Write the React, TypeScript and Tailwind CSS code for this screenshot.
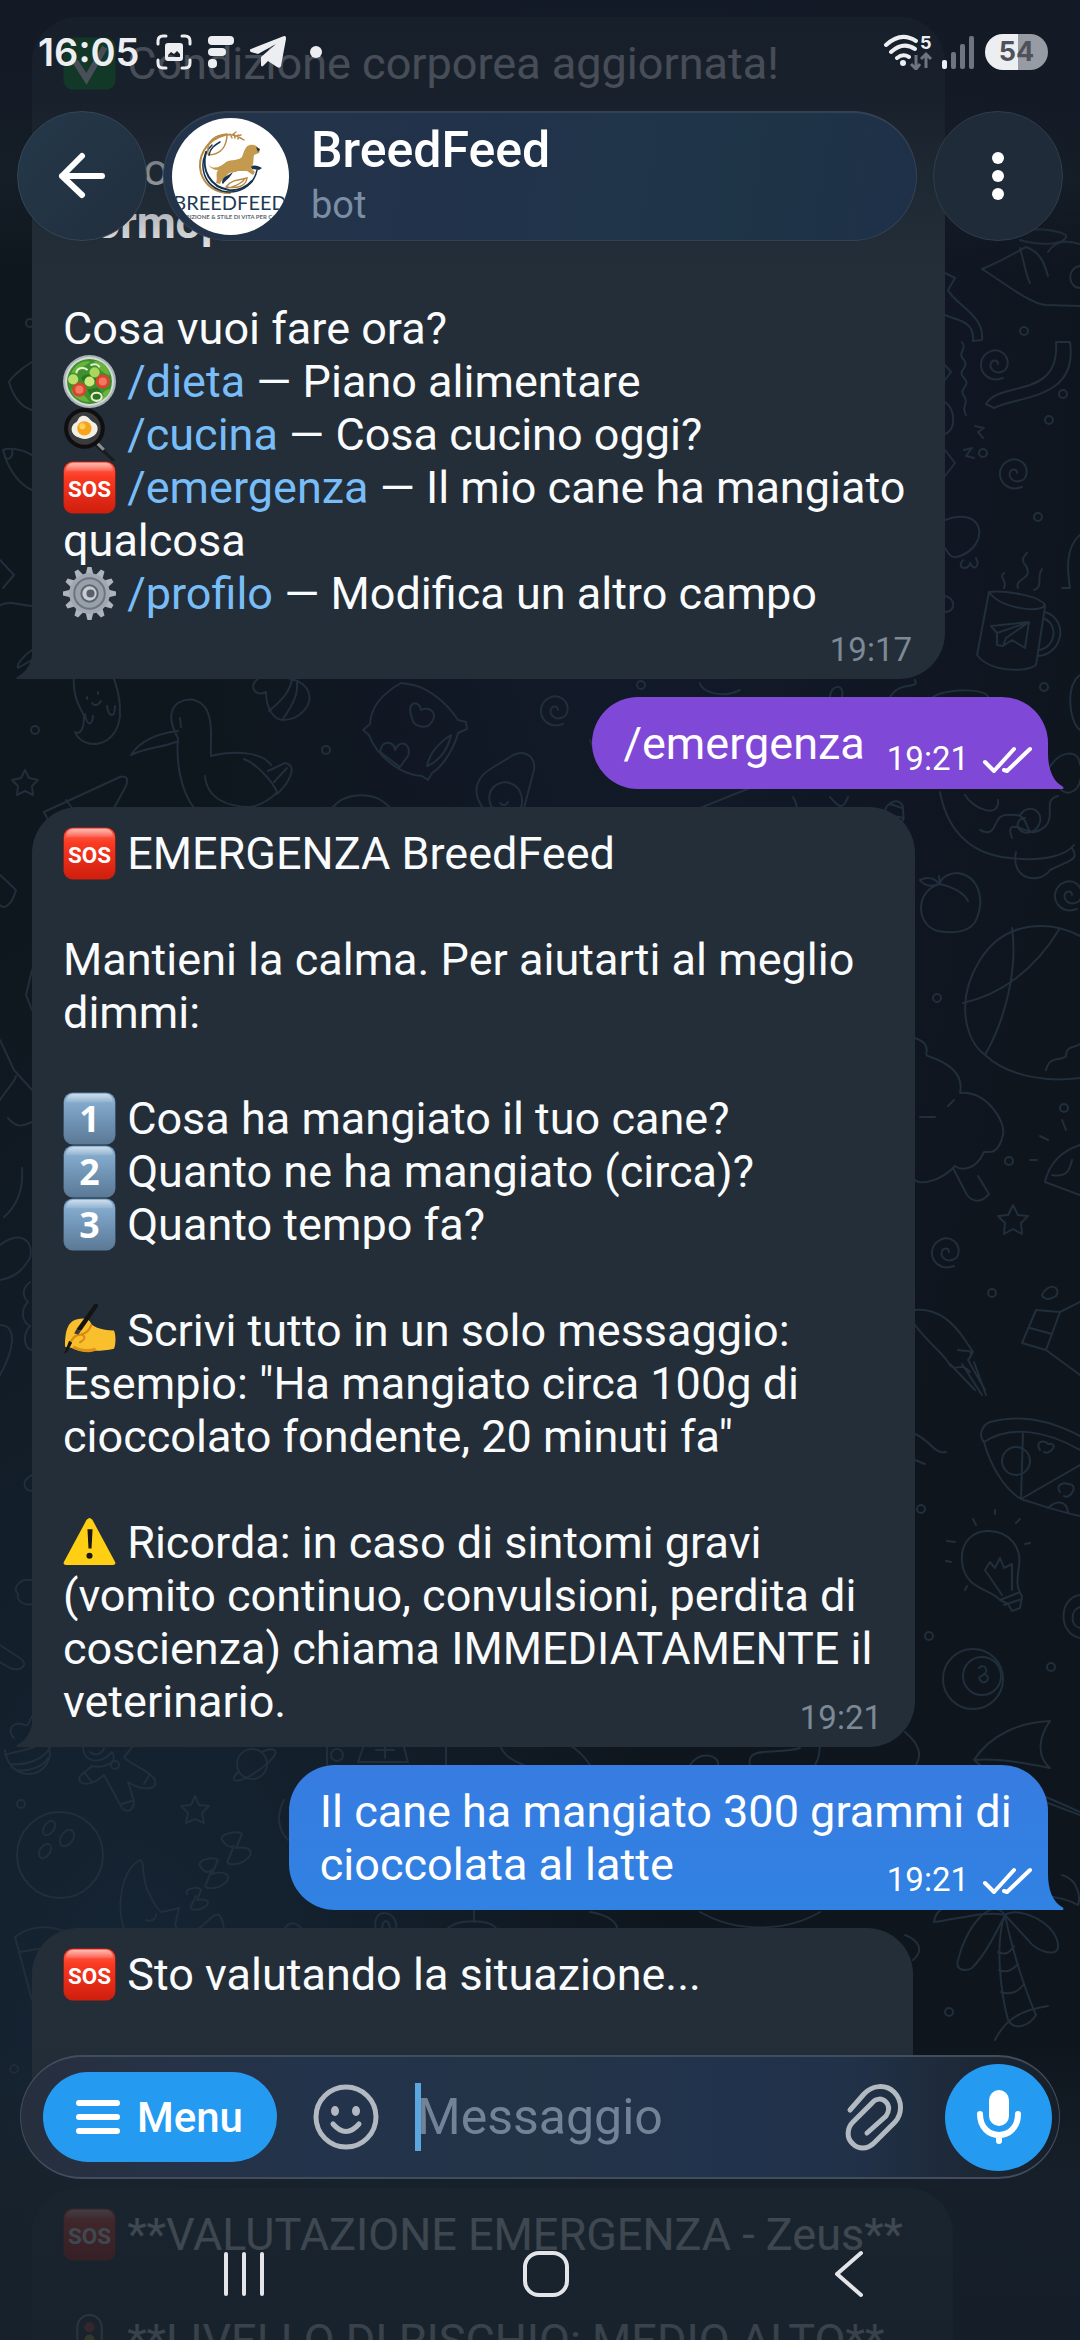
import type { ReactNode } from "react";

/* ---------- Wallpaper ---------- */

function Star({ x, y, r }: { x: number; y: number; r: number }) {
  const pts = Array.from({ length: 10 }, (_, i) => {
    const a = -Math.PI / 2 + (i * Math.PI) / 5;
    const k = i % 2 ? r * 0.5 : r;
    return `${Math.round(x + k * Math.cos(a))},${Math.round(y + k * Math.sin(a))}`;
  }).join(" ");
  return <polygon points={pts} />;
}

function Spiral({ x, y }: { x: number; y: number }) {
  return (
    <path
      transform={`translate(${x} ${y})`}
      d="M8 13C-6 18-15 8-14-2C-12-13 0-18 8-12C15-6 14 5 6 7C-1 9-6 3-4-2C-2-6 3-5 3-1"
    />
  );
}

const dots = [
  [35, 730], [326, 750], [641, 685], [1044, 687], [1024, 331], [1049, 420], [983, 453], [1063, 394],
  [1038, 517], [937, 998], [1009, 1161], [1064, 1108], [992, 1293], [921, 1509], [929, 1636], [1051, 1667],
  [949, 2012], [21, 1804], [30, 323], [14, 2069],
];

function Wallpaper() {
  return (
    <div
      aria-hidden="true"
      className="absolute inset-0 -z-10 bg-[radial-gradient(ellipse_at_60%_12%,#131a2c_0%,#131a2c00_50%),radial-gradient(ellipse_at_12%_90%,#162636_0%,#16263600_40%),linear-gradient(90deg,#0f171e,#0e151d)]"
    >
      <svg
        viewBox="0 0 1080 2340"
        preserveAspectRatio="xMidYMid slice"
        className="size-full"
        fill="none"
        stroke="#212e3b"
        strokeWidth="2"
        strokeLinecap="round"
        strokeLinejoin="round"
      >
        {dots.map(([x, y]) => (
          <circle key={`${x}-${y}`} cx={x} cy={y} r="4" />
        ))}
        <Star x={25} y={784} r={14} />
        <Star x={195} y={1811} r={15} />
        <Star x={1013} y={1221} r={16} />
        <Spiral x={555} y={711} />
        <Spiral x={995} y={365} />
        <Spiral x={1014} y={474} />
        <Spiral x={1069} y={896} />
        <Spiral x={946} y={1253} />
        {/* ghost */}
        <path d="M74 670C72 700 80 706 84 716C84 730 80 735 75 732C82 750 116 750 120 716C121 696 116 682 110 670M92 703C94 706 98 706 101 701M87 697V699M98 692V694M85 714C86 724 92 728 93 716M107 706C109 718 115 718 115 706" />
        {/* duck */}
        <path d="M194 808C180 790 176 760 178 738C170 724 168 710 178 703C190 696 205 700 209 716C213 730 210 745 211 756C235 750 262 752 271 765M178 731C160 733 140 740 131 755C145 748 160 748 176 742M205 776C207 800 230 807 250 807C262 806 275 795 277 792C272 780 255 763 244 759M268 771L285 763C298 765 290 782 277 794M274 782L287 768M180 718L181 727" />
        {/* easter egg */}
        <path d="M266 692C255 698 248 685 258 679M266 692C266 710 275 720 283 720C300 720 312 705 309 694C307 685 298 680 290 679M269 711C282 700 290 692 292 679M283 719C296 700 298 692 297 681" />
        {/* pillow with hearts */}
        <path d="M401 683C385 692 371 705 370 724L363 730L369 735C376 755 400 775 422 776L428 780L432 773C445 765 455 745 458 733L467 729L466 722L458 720C445 700 425 686 408 684ZM412 718C405 700 420 700 421 710C430 705 441 715 428 726C420 728 413 725 412 718ZM380 752C382 738 395 742 395 750C400 738 412 744 408 756L400 767ZM451 735C440 742 430 752 427 766C438 762 448 750 451 735Z" />
        {/* pizza, egg, avocado around the second message */}
        <path d="M48 820L44 812L120 777C128 775 128 780 126 786L114 808M66 800L72 808M332 808C345 792 375 790 390 808M483 808C470 790 478 776 492 768L510 757C524 748 536 756 534 770L524 808M505 820C484 808 484 785 505 782C526 785 524 808 518 812M500 803C503 806 506 806 508 802" />
        <path d="M650 760C640 775 600 770 590 740M700 808L770 780M793 797C800 808 795 815 800 820M830 797C838 806 842 812 848 797M885 810C890 798 905 798 903 812C905 822 900 826 896 822M890 804L902 808M888 815L904 818M740 690C720 700 700 690 700 683M830 697C830 685 845 682 842 697M890 697C900 680 920 690 915 680M933 697C945 688 990 688 988 698" />
        {/* mug with a paper plane */}
        <path d="M989 592C1005 590 1040 596 1045 605C1040 614 1000 608 989 592L977 655C990 672 1025 673 1036 665L1045 607M1045 612C1070 620 1062 655 1038 656M1045 619C1058 625 1056 646 1040 650M991 626L1029 622L1025 648L1012 640L1003 646L997 645V633ZM997 633L1029 622L1006 638L1003 646M1004 588C1008 580 998 578 1004 573M1018 588C1014 578 1034 580 1026 566C1020 560 1024 556 1027 553M1034 590C1044 586 1036 578 1042 569" />
        {/* hat, streamers and lightning */}
        <path d="M990 238C1000 228 1050 226 1066 235C1068 245 1040 246 1020 240M982 269C1000 262 1020 250 1026 247C1040 252 1044 262 1048 276M982 269C1000 280 1030 304 1046 305L1080 306M1020 248C1024 262 1026 276 1030 283M1048 252C1056 240 1066 240 1080 244M1080 266C1066 268 1068 288 1080 288" />
        <path d="M945 273L955 278L948 290C955 305 985 315 982 340L973 341C975 320 955 320 945 315M986 404C1000 380 1060 400 1056 342H1070C1078 400 1020 395 994 408ZM962 342C968 350 956 352 964 360C970 368 956 370 964 378C972 386 958 388 964 396C970 404 960 406 966 415M975 426L984 428L978 432L983 438M964 450L972 448L966 456L974 458" />
        <path d="M945 365L951 372L945 380M945 402C956 410 956 430 945 434M945 450L955 463L945 476M945 520C985 505 990 545 960 556C950 560 948 552 945 548M963 560C955 570 970 570 970 563C974 572 980 566 976 558M945 596C956 598 956 612 945 612M1080 535C1064 548 1068 575 1070 588L1062 588M1080 675C1066 685 1068 720 1080 730" />
        {/* noodle bowl */}
        <path d="M940 792C948 835 975 855 1010 858C1045 862 1066 855 1074 845M965 795C972 808 1000 820 998 800M980 830C1000 840 990 812 1010 815C1035 812 1020 840 1040 830C1060 820 1040 800 1058 796M1020 815C1030 800 1050 815 1035 830C1020 840 1010 820 1025 818M1016 852C1010 880 1040 885 1050 870C1070 860 1080 860 1072 848M1048 770C1060 748 1080 750 1080 765M1058 785C1065 800 1080 790 1080 780M1012 838C1005 820 1020 828 1030 832" />
        {/* peach */}
        <path d="M940 884C915 890 915 925 938 931C955 934 972 932 977 918C985 898 978 876 958 873C946 873 940 880 940 884C950 886 964 892 968 901M940 884L935 880C932 878 926 877 920 880C926 888 934 886 940 884L939 876" />
        {/* beach ball */}
        <path d="M1080 936C1050 920 1005 920 980 960C955 1000 965 1040 985 1055C1010 1078 1050 1082 1080 1078M1012 928C1018 970 1005 1020 985 1055M1060 928C1035 970 1000 995 963 1003" />
        {/* tree */}
        <path d="M915 1038C935 1045 922 1056 928 1056C940 1060 965 1070 960 1093C985 1090 1006 1120 1003 1135C998 1155 990 1152 984 1152C975 1172 960 1170 955 1166C940 1182 920 1185 915 1180M953 1168L967 1195C975 1205 984 1200 989 1194L978 1176M920 1117H935M948 1106L954 1100M1046 1070C1050 1055 1060 1062 1066 1056C1066 1045 1075 1048 1080 1044" />
        <path d="M1045 1182C1050 1160 1065 1150 1080 1145M1045 1182L1080 1195M1052 1175C1068 1178 1070 1168 1072 1160M1040 1136L1048 1140M1030 1160H1037M1062 1120L1066 1130" />
        {/* squid */}
        <path d="M915 1310C940 1308 955 1325 965 1340L973 1352L968 1360L985 1390M974 1362L986 1395M962 1364L982 1395M950 1364L975 1390M915 1325C930 1345 940 1350 948 1362C955 1375 960 1360 970 1372M958 1350C966 1352 974 1348 970 1358M915 1434C930 1440 935 1455 946 1452M915 1460L925 1464" />
        {/* parcel and pizza slice */}
        <path d="M1036 1310L1060 1312L1046 1350L1022 1343ZM1030 1328L1052 1334M1060 1312L1080 1302M1046 1350L1080 1375M1042 1295C1048 1282 1062 1286 1056 1296C1050 1300 1044 1300 1042 1295" />
        <path d="M984 1442C978 1436 982 1425 990 1422C1020 1414 1050 1420 1080 1436M984 1442C1010 1425 1045 1430 1080 1450M984 1442C990 1465 1005 1490 1021 1499C1040 1505 1060 1512 1080 1516M1023 1432L1021 1499L1080 1465M1040 1450C1034 1440 1046 1440 1048 1444C1060 1442 1050 1456 1044 1452M1060 1492C1054 1484 1066 1482 1068 1484C1080 1484 1070 1500 1064 1496M1048 1508C1056 1500 1066 1500 1068 1512" />
        <circle cx="1016" cy="1461" r="14" />
        {/* light bulb */}
        <path d="M1000 1600C990 1588 965 1590 962 1562C960 1540 975 1530 990 1531C1010 1532 1022 1548 1019 1566C1017 1580 1016 1588 1022 1596L1020 1608L1012 1611L1008 1604ZM1000 1600L1020 1592M1004 1605L1022 1599M1002 1595L985 1570L990 1562L995 1568L1000 1558L1004 1568L1012 1564L1012 1590M947 1541L955 1542M946 1561L951 1562M973 1519L976 1525M995 1510V1514M1020 1519L1016 1523M1025 1544L1030 1543M965 1590L967 1586" />
        <ellipse cx="973" cy="1679" rx="30" ry="30" />
        <circle cx="982" cy="1676" r="19" />
        <path d="M979 1668C985 1662 989 1672 984 1674C992 1676 986 1686 981 1681C976 1676 984 1676 984 1674M1080 1595C1058 1598 1058 1634 1080 1638M1080 1607C1070 1610 1070 1626 1080 1628" />
        {/* umbrella and palm */}
        <path d="M974 1760C990 1735 1020 1722 1050 1721C1040 1735 1035 1755 1050 1768C1030 1764 1000 1758 974 1760ZM974 1760C990 1775 1020 1785 1080 1812M1040 1800L1080 1815M905 1732C920 1745 922 1755 916 1765" />
        <path d="M1005 1915C995 1940 1000 1990 1008 2020C1015 2032 1030 2025 1036 2015C1025 1990 1012 1950 1005 1915M998 1952C1006 1956 1010 1952 1014 1946M999 1970C1008 1974 1014 1968 1018 1964M1001 1992C1012 1996 1020 1990 1024 1984M1005 1915C990 1895 965 1930 958 1960C955 1970 965 1972 972 1968C985 1955 995 1935 1005 1915C1020 1905 1060 1925 1058 1948C1055 1958 1035 1950 1028 1940L1005 1915M1005 1915C985 1910 955 1920 934 1922C936 1905 960 1898 985 1905M1062 1875C1080 1880 1080 1900 1078 1905C1060 1895 1030 1892 1012 1905M995 2040C1005 2020 1020 2010 1048 2006M913 1960C925 1950 918 1940 905 1935" />
        {/* gingerbread man */}
        <path d="M83 1745C82 1762 100 1766 112 1752M112 1752C120 1765 100 1768 92 1766L80 1776C76 1785 90 1788 104 1775L122 1808C130 1816 137 1806 132 1795L128 1782C140 1790 158 1792 155 1780C150 1770 130 1765 124 1757L134 1745M90 1752C95 1757 102 1754 104 1748M84 1772L92 1782M144 1784L150 1774M122 1804L134 1800" />
        <circle cx="115" cy="1765" r="4" />
        {/* planets */}
        <path d="M5 1750C8 1780 45 1782 50 1755C50 1745 45 1740 40 1738M5 1755C20 1750 35 1750 46 1740M10 1764C28 1766 44 1758 50 1748M16 1770C30 1772 44 1766 48 1758" />
        <circle cx="252" cy="1764" r="15" />
        <path d="M239 1771C228 1782 236 1783 248 1777C262 1769 278 1756 275 1751C272 1747 266 1750 262 1752" />
        {/* bowling ball */}
        <circle cx="60" cy="1855" r="43" />
        <ellipse cx="49" cy="1828" rx="5" ry="8" transform="rotate(35 49 1828)" />
        <ellipse cx="67" cy="1838" rx="6" ry="9" transform="rotate(35 67 1838)" />
        <ellipse cx="45" cy="1851" rx="5" ry="8" transform="rotate(35 45 1851)" />
        {/* sleeping moon */}
        <path d="M125 1932C115 1905 122 1870 140 1860C146 1862 140 1880 150 1895C154 1905 160 1912 162 1912L179 1908L175 1925L180 1932M146 1920C150 1922 156 1920 156 1914M192 1932C205 1928 212 1912 219 1915C224 1920 224 1928 223 1932" />
        <path d="M222 1840C218 1834 238 1830 242 1834L236 1848C250 1846 254 1852 248 1858C240 1866 224 1866 228 1860L234 1846C230 1848 226 1846 222 1840ZM200 1866C196 1860 214 1856 218 1860L212 1874C226 1870 232 1876 226 1882C218 1890 202 1890 206 1884L212 1870C208 1874 204 1872 200 1866ZM187 1894C184 1888 198 1886 201 1890L197 1900C206 1898 211 1902 206 1906C200 1911 188 1911 191 1906L196 1896" />
        <path d="M15 1937C30 1925 50 1925 66 1932M15 1937L32 2000M19 1952L45 1948M284 1800C276 1815 278 1830 288 1840M327 1740V1765M358 1762C362 1750 364 1745 366 1740M402 1740L408 1762L358 1762M376 1750H394M385 1744V1758M446 1740V1765M500 1745C505 1760 520 1762 525 1766M590 1765C580 1750 570 1745 560 1740M690 1765C700 1750 720 1755 718 1765M750 1765C745 1745 780 1755 800 1748M820 1740C820 1755 818 1760 815 1765M284 1930C290 1918 300 1925 302 1930M376 1930C370 1905 400 1910 396 1930M382 1930C382 1918 390 1918 390 1930M448 1928C460 1918 490 1920 496 1928M474 1910V1922M590 1912C610 1915 620 1925 616 1930M700 1912C740 1935 790 1930 820 1912" />
        <circle cx="337" cy="1755" r="6" />
        {/* left edge */}
        <path d="M32 362C18 370 10 380 9 382C14 400 24 408 32 410M32 455C20 448 8 448 3 450C8 470 20 485 32 490M12 450C14 458 8 460 5 458M0 560L14 575L3 588M0 605C12 600 22 606 32 606M32 650C24 655 16 665 18 668L32 660M0 875L16 890C12 905 4 910 0 905M32 970L26 995L32 1010M0 1040L14 1070L32 1090M0 1100C10 1085 16 1080 16 1076M8 1118C18 1130 24 1125 32 1122M22 1168C24 1195 12 1210 4 1217M0 1245C20 1230 34 1240 30 1258C20 1275 10 1278 0 1280M30 1282C20 1290 24 1298 28 1302C20 1310 22 1322 30 1326C22 1335 24 1348 32 1350M0 1325C18 1325 14 1350 0 1375M32 1475C22 1480 22 1490 32 1491M32 1580C18 1578 12 1590 18 1594C16 1602 26 1606 32 1604M0 1645L20 1658C30 1665 20 1672 10 1668L0 1662M32 1716C28 1722 30 1728 22 1724C10 1722 8 1732 14 1738" />
      </svg>
    </div>
  );
}

/* ---------- Emoji ---------- */

function Emoji({ label, children }: { label: string; children: ReactNode }) {
  return (
    <svg
      role="img"
      aria-label={label}
      viewBox="0 0 52 52"
      className="-my-2 inline-block size-[53px] align-[-3px]"
    >
      {children}
    </svg>
  );
}

function Key({ text, from, to, edge, size }: { text: string; from: string; to: string; edge: string; size: number }) {
  const id = `key-${text}`;
  return (
    <Emoji label={text}>
      <defs>
        <linearGradient id={id} x1="0" y1="0" x2="0" y2="1">
          <stop offset="0" stopColor={from} />
          <stop offset="0.3" stopColor={edge} />
          <stop offset="1" stopColor={to} />
        </linearGradient>
        <linearGradient id={`${id}-shine`} x1="0" y1="0" x2="0" y2="1">
          <stop offset="0" stopColor="#fff" stopOpacity="0.55" />
          <stop offset="1" stopColor="#fff" stopOpacity="0.1" />
        </linearGradient>
      </defs>
      <rect x="0.5" y="0.5" width="51" height="51" rx="9" fill={to} />
      <rect x="1" y="1" width="50" height="49" rx="9" fill={`url(#${id})`} />
      <path d="M3 10C3 5 6 2 10 2H42C46 2 49 5 49 10Z" fill={`url(#${id}-shine)`} />
      <text
        x="26"
        y={size > 30 ? 39 : 35}
        textAnchor="middle"
        fontFamily={size > 30 ? "'Open Sans', sans-serif" : "Roboto, sans-serif"}
        fontWeight="700"
        fontSize={size}
        fill="#fff"
      >
        {text}
      </text>
    </Emoji>
  );
}

const Sos = () => <Key text="SOS" from="#ff6a5a" edge="#fb3a22" to="#d01f0e" size={22} />;
const Digit = ({ n }: { n: string }) => <Key text={n} from="#8fb4d4" edge="#7da3c6" to="#5b7a97" size={35} />;

const Check = () => (
  <Emoji label="Fatto">
    <rect x="0.5" y="0.5" width="51" height="51" rx="9" fill="#0a9a25" />
    <path d="M12 24L23 41L41 10" fill="none" stroke="#fff" strokeWidth="6" />
  </Emoji>
);

const Salad = () => (
  <Emoji label="Insalata">
    <circle cx="26" cy="26" r="26" fill="#aab4b6" />
    <circle cx="26" cy="26" r="24" fill="#d3dad9" />
    <circle cx="26" cy="26" r="22" fill="#3f8f2c" />
    <path d="M8 18C12 8 22 4 27 7C20 10 18 16 8 18ZM30 6C40 6 45 12 46 20C38 18 34 12 30 6ZM8 34C14 32 22 40 26 46C18 46 10 42 8 34ZM36 44C38 36 42 34 47 33C45 40 41 43 36 44Z" fill="#67b43c" />
    <path d="M18 22C24 16 32 20 33 26C28 30 20 30 18 22ZM24 34L34 32L40 40L30 46Z" fill="#2c7420" />
    <circle cx="39" cy="26" r="7" fill="#d9432f" />
    <circle cx="39" cy="26" r="4" fill="#ef7a5f" />
    <circle cx="16" cy="34" r="7" fill="#d9432f" />
    <circle cx="16" cy="34" r="4" fill="#ef7a5f" />
    <circle cx="10" cy="24" r="5" fill="#b8df6c" />
    <circle cx="26" cy="26" r="5" fill="#c9e97f" />
    <circle cx="31" cy="17" r="5" fill="#a9d65c" />
    <g fill="none" stroke="#e6efd2" strokeWidth="2">
      <path d="M13 18C14 11 22 12 24 15M27 10C32 8 35 10 36 12" />
      <ellipse cx="33" cy="41" rx="5" ry="4" />
    </g>
  </Emoji>
);

const Pan = () => (
  <Emoji label="Padella">
    <path d="M34 34L51 51C52 54 49 54 46 50L31 37Z" fill="#1b1b1c" />
    <path d="M34 35L40 41" stroke="#8b8f92" strokeWidth="3" />
    <circle cx="21" cy="20" r="20" fill="#0f0f10" />
    <circle cx="21" cy="20" r="16" fill="#3a3b3d" />
    <path d="M18 8C24 6 26 12 30 14C36 17 35 25 29 28C23 32 17 30 13 28C6 24 8 16 13 14C15 12 15 9 18 8Z" fill="#f2efe6" />
    <circle cx="21" cy="20" r="7" fill="#f6a51b" />
    <circle cx="19" cy="18" r="3" fill="#ffd05a" />
  </Emoji>
);

const Gear = () => (
  <Emoji label="Impostazioni">
    <g fill="#aeb4bc">
      {Array.from({ length: 12 }, (_, i) => (
        <path key={i} d="M22 8L24 0H28L30 8Z" transform={`rotate(${i * 30} 26 26)`} />
      ))}
    </g>
    <circle cx="26" cy="26" r="20" fill="#a2a8b1" />
    <circle cx="26" cy="26" r="16" fill="#6d7580" />
    <circle cx="26" cy="26" r="14" fill="#98a0aa" />
    <circle cx="26" cy="26" r="9" fill="#5d6570" />
    <circle cx="26" cy="26" r="7" fill="#c8cdd3" />
    <circle cx="27" cy="26" r="4" fill="#59606a" />
  </Emoji>
);

const Writing = () => (
  <Emoji label="Mano che scrive">
    <path d="M2 42C2 28 4 17 14 15C22 13 26 15 28 20C32 23 36 25 50 26C52 30 52 40 50 44C40 46 36 46 30 46C22 48 14 46 8 43Z" fill="#f9bf2c" />
    <path d="M6 42C8 34 12 30 18 30C24 32 20 36 16 38M28 20C26 26 22 29 18 30" fill="none" stroke="#d98a12" strokeWidth="2" />
    <path d="M10 42C16 46 28 47 32 44" fill="none" stroke="#de9317" strokeWidth="3" />
    <path d="M31 0C34 -1 35 1 34 3L18 26L13 25Z" fill="#141414" />
    <path d="M13 25L18 26L15 30L11 29Z" fill="#3b3b3b" />
    <path d="M6 36L9 38L4 47L1 49Z" fill="#141414" />
  </Emoji>
);

const Warning = () => (
  <Emoji label="Attenzione">
    <path d="M26 2C27 2 28 3 29 4L51 45C52 47 51 48 49 48H3C1 48 0 47 1 45L23 4C24 3 25 2 26 2Z" fill="#ffcf14" />
    <path d="M24 13H29L28 32H25Z" fill="#17181a" />
    <circle cx="26" cy="39" r="3" fill="#17181a" />
  </Emoji>
);

const TrafficLight = () => (
  <Emoji label="Semaforo">
    <rect x="14" y="1" width="24" height="50" rx="12" fill="#2b3137" stroke="#9aa3aa" strokeWidth="2" />
    <circle cx="26" cy="13" r="5" fill="#d8483f" />
    <circle cx="26" cy="25" r="5" fill="#dcb53a" />
    <circle cx="26" cy="38" r="5" fill="#48b35a" />
  </Emoji>
);

/* ---------- Messages ---------- */

function DoubleTick() {
  return (
    <svg aria-label="Letto" role="img" viewBox="0 0 52 30" className="h-[30px] w-[52px]" fill="none" stroke="#fff" strokeWidth="4" strokeLinecap="round" strokeLinejoin="round">
      <path d="M4 18L13 27L33 5M23 26L26 27L49 5" />
    </svg>
  );
}

function Received({ size, tail, time, children }: { size: string; tail?: boolean; time?: string; children: ReactNode }) {
  return (
    <article className={`relative max-w-full self-start bg-[#232e39] px-[31px] pt-5 pb-[19px] ${tail ? "rounded-[46px] rounded-bl-none" : "rounded-[46px]"} ${size}`}>
      {children}
      {time && <time className="absolute right-[33px] bottom-3 text-[33px] leading-[34px] text-[#7c8996]">{time}</time>}
      {tail && (
        <svg aria-hidden="true" viewBox="0 0 17 24" className="absolute bottom-0 -left-4 h-6 w-[17px]" fill="#232e39">
          <path d="M17 0H16C15 10 9 18 1 22C0 23 0 24 2 24H17Z" />
        </svg>
      )}
    </article>
  );
}

function Sent({ tone, tailFill, children }: { tone: string; tailFill: string; children: ReactNode }) {
  return (
    <article className={`relative flex max-w-full items-end self-end rounded-[46px] rounded-br-none pt-5 pr-[15px] pb-[13px] pl-[31px] text-white ${tone}`}>
      {children}
      <div className="flex shrink-0 items-center gap-3 self-end">
        <time className="text-[33px] leading-[34px]">19:21</time>
        <DoubleTick />
      </div>
      <svg aria-hidden="true" viewBox="0 0 17 36" className={`absolute -right-4 bottom-0 h-9 w-[17px] ${tailFill}`}>
        <path d="M0 0H1C1 16 6 28 15 33C17 34 17 36 15 36H0Z" />
      </svg>
    </article>
  );
}

function Command({ name }: { name: string }) {
  return (
    <a href={`#${name}`} className="text-[#78bdf8]">
      /{name}
    </a>
  );
}

function Gap() {
  return <div className="h-[53px]" />;
}

/* ---------- Status bar ---------- */

function StatusBar() {
  return (
    <div className="flex h-[104px] items-center justify-between pr-8 pl-[38px] text-[#eceef1]">
      <div className="flex items-center">
        <span className="w-[118px] font-['Inter'] text-[38px] leading-[44px] font-semibold">16:05</span>
        <svg aria-hidden="true" viewBox="0 0 36 36" className="size-9" fill="none" stroke="currentColor" strokeWidth="3" strokeLinecap="round">
          <path d="M2 10V7Q2 2 7 2H10M26 2H29Q34 2 34 7V10M34 26V29Q34 34 29 34H26M10 34H7Q2 34 2 29V26" />
          <path d="M12 9H24Q27 9 27 12V24Q27 27 24 27H12Q9 27 9 24V12Q9 9 12 9ZM12 23H24V20L21 17L18 20L15 18L12 21Z" fill="currentColor" fillRule="evenodd" stroke="none" />
        </svg>
        <svg aria-hidden="true" viewBox="0 0 26 32" className="ml-4 h-8 w-[26px]" fill="currentColor">
          <rect x="0" y="0" width="26" height="9" rx="4" />
          <rect x="0" y="12" width="18" height="8" rx="4" />
          <rect x="0" y="23" width="9" height="9" rx="4" />
        </svg>
        <svg aria-hidden="true" viewBox="0 0 36 32" className="ml-4 h-8 w-9" fill="currentColor">
          <path d="M34 0C36 0 36 1 36 3L31 30C30 32 29 32 27 31L18 25L13 30C12 31 11 30 11 29V21L26 8L8 18L1 16C-1 15-1 14 1 13Z" />
        </svg>
        <span className="ml-6 size-3 rounded-full bg-current" />
      </div>
      <div className="flex items-center">
        <svg aria-label="Wi-Fi 5" role="img" viewBox="0 0 50 36" className="h-9 w-[50px]">
          <g fill="none" stroke="currentColor" strokeWidth="4" strokeLinecap="round">
            <path d="M3 11Q18-3 33 7M8 18Q20 7 32 15M14 24Q20 19 26 23" />
          </g>
          <circle cx="20" cy="29" r="3" fill="currentColor" />
          <text x="37" y="15" fontFamily="Inter, sans-serif" fontWeight="700" fontSize="18" fill="currentColor">5</text>
          <path d="M33 21V34M28 30L33 35L37 30M43 34V21M38 25L43 20L48 25" fill="none" stroke="#6f7580" strokeWidth="3" />
        </svg>
        <svg aria-label="Segnale" role="img" viewBox="0 0 32 36" className="ml-[9px] h-9 w-8">
          <rect x="0" y="26" width="5" height="9" rx="2" fill="currentColor" />
          <rect x="9" y="18" width="5" height="17" rx="2" fill="#6f7580" />
          <rect x="18" y="10" width="5" height="25" rx="2" fill="#6f7580" />
          <rect x="27" y="2" width="5" height="33" rx="2" fill="#6f7580" />
        </svg>
        <span className="ml-[11px] flex h-9 w-[63px] items-center justify-center rounded-full bg-[linear-gradient(90deg,#eceef1_53%,#979ba4_53%)] font-['Inter'] text-[27px] leading-9 font-bold text-[#4f5258]">
          54
        </span>
      </div>
    </div>
  );
}

/* ---------- Header ---------- */

function Avatar() {
  return (
    <svg aria-label="Logo BreedFeed" role="img" viewBox="0 0 117 117" className="size-[117px] rounded-full bg-white">
      <g fill="none" strokeLinecap="round">
        <path d="M53 17C33 22 25 40 29 55C33 68 44 75 58 75" stroke="#b98a45" strokeWidth="2" />
        <path d="M40 27C25 42 29 66 50 73C66 77 82 68 85 52" stroke="#17344e" strokeWidth="1.5" />
        <path d="M34 34C29 52 38 69 57 72C66 73 75 69 80 63" stroke="#17344e" strokeWidth="2" />
        <path d="M36 36C34 22 44 17 55 16C55 27 50 36 37 37Z" stroke="#b98a45" strokeWidth="1.5" />
        <path d="M37 37C38 30 43 27 48 24" stroke="#17344e" strokeWidth="1.5" />
        <path d="M54 69C60 61 68 62 75 60C74 68 66 71 54 69M60 69C66 67 70 64 72 62" stroke="#b98a45" strokeWidth="1.5" />
        <path d="M54 17C60 16 66 18 72 22M58 16L60 20M62 16L63 20M66 17L66 21M60 17L64 14M65 18L69 17" stroke="#b98a45" strokeWidth="1.5" />
      </g>
      <path d="M36 46C40 52 48 50 54 44C60 41 66 43 70 39C72 34 73 28 78 27C83 26 86 29 88 32L87 35L82 37C81 43 82 47 79 50L83 54L81 57L75 53L66 53C63 55 60 53 56 56C54 59 50 61 48 66L44 65C46 60 43 56 46 52C42 52 38 50 36 46Z" fill="#c39a4e" />
      <path d="M50 65C50 58 56 58 61 54C58 60 54 62 51 66ZM79 49C82 46 86 48 90 50L87 52L80 51ZM84 29L88 31L86 34Z" fill="#17344e" />
      <text x="58" y="92" textAnchor="middle" fontFamily="Lato, sans-serif" fontSize="20" fill="#1e3a54">BREEDFEED</text>
      <text x="56" y="101" textAnchor="middle" fontFamily="Lato, sans-serif" fontSize="6" fontWeight="700" fill="#5b6670">NUTRIZIONE &amp; STILE DI VITA PER CANI</text>
    </svg>
  );
}

function Header() {
  return (
    <header className="absolute inset-x-0 top-0 bg-[linear-gradient(180deg,#141b27cc_0px,#151c28c4_100px,#1a232e80_180px,#1f293300_100%)] pb-7">
      <StatusBar />
      <div className="flex items-center gap-4 px-[17px] pt-[7px]">
        <button type="button" aria-label="Indietro" className="flex size-[130px] shrink-0 items-center justify-center rounded-full border border-[#364554] bg-linear-to-br from-[#24394a] to-[#212e3d]">
          <svg aria-hidden="true" viewBox="0 0 48 48" className="size-12" fill="none" stroke="#fff" strokeWidth="6" strokeLinecap="round" strokeLinejoin="round">
            <path d="M44 24H4M24 4L4 24L24 43" />
          </svg>
        </button>
        <div className="flex h-[130px] min-w-0 grow items-center gap-[22px] rounded-full border border-t-2 border-[#334253] bg-[linear-gradient(100deg,#23344a_0%,#21324a_35%,#20344a_60%,#1e3446_80%,#1f3049_100%)] pl-2">
          <Avatar />
          <div>
            <h1 className="text-[50px] leading-[56px] font-medium text-white">BreedFeed</h1>
            <p className="text-[38px] leading-[54px] text-[#7a8ea4]">bot</p>
          </div>
        </div>
        <button type="button" aria-label="Altre opzioni" className="flex size-[130px] shrink-0 flex-col items-center justify-center gap-[6px] rounded-full border border-[#2f3d4b] bg-[#1f2b39]">
          <span className="size-3 rounded-full bg-white" />
          <span className="size-3 rounded-full bg-white" />
          <span className="size-3 rounded-full bg-white" />
        </button>
      </div>
    </header>
  );
}

/* ---------- Composer and system navigation ---------- */

function Footer() {
  return (
    <footer className="absolute inset-x-0 bottom-0 bg-[linear-gradient(180deg,#18222c00_0px,#18222cd0_130px,#16202ad8_100%)] px-5 pt-3">
      <form onSubmit={(e) => e.preventDefault()} className="flex h-[124px] items-center rounded-full border border-t-2 border-b-2 border-[#414d5c] bg-[linear-gradient(90deg,#272f3e_0%,#253247_15%,#22334b_30%,#233447_50%,#21324d_68%,#213148_80%,#1d2836_92%,#161f29_100%)] pr-[7px] pl-[22px]">
        <button type="button" className="flex h-[90px] w-[234px] shrink-0 items-center gap-4 rounded-full bg-[#249af1] pl-8 text-[42px] font-medium text-white">
          <svg aria-hidden="true" viewBox="0 0 46 36" className="h-9 w-[46px] shrink-0" stroke="#fff" strokeWidth="6" strokeLinecap="round">
            <path d="M4 4H42M4 18H42M4 32H42" />
          </svg>
          Menu
        </button>
        <button type="button" aria-label="Emoji" className="ml-9 shrink-0">
          <svg aria-hidden="true" viewBox="0 0 66 66" className="size-[66px]">
            <circle cx="33" cy="33" r="30" fill="none" stroke="#b3b9c1" strokeWidth="5" />
            <ellipse cx="22" cy="27" rx="4" ry="5" fill="#b3b9c1" />
            <ellipse cx="43" cy="27" rx="4" ry="5" fill="#b3b9c1" />
            <path d="M20 40Q33 55 46 40" fill="none" stroke="#b3b9c1" strokeWidth="5" strokeLinecap="round" />
          </svg>
        </button>
        <span aria-hidden="true" className="ml-9 h-[68px] w-[6px] shrink-0 bg-[#5ba6df]" />
        <input aria-label="Messaggio" placeholder="Messaggio" className="-ml-1 min-w-0 grow bg-transparent text-[50px] leading-[68px] text-white outline-none placeholder:text-[#728398]" />
        <button type="button" aria-label="Allega" className="mr-10 shrink-0">
          <svg aria-hidden="true" viewBox="0 0 60 68" className="h-[68px] w-[60px]" fill="none" stroke="#b3b9c1" strokeWidth="5" strokeLinecap="round">
            <path d="M5 27L19 11C27 2 41 1 49 9C58 18 57 31 50 39L29 60C22 67 13 66 8 61C1 55 2 45 8 39L27 20C31 15 37 15 41 19C45 23 44 29 41 33L22 50" />
          </svg>
        </button>
        <button type="button" aria-label="Registra messaggio vocale" className="flex size-[107px] shrink-0 items-center justify-center rounded-full bg-[#249af1]">
          <svg aria-hidden="true" viewBox="0 0 46 56" className="h-14 w-[46px]">
            <rect x="13" y="1" width="20" height="36" rx="10" fill="#fff" />
            <path d="M4 25C4 53 42 53 42 25M23 46V52" fill="none" stroke="#fff" strokeWidth="6" strokeLinecap="round" />
          </svg>
        </button>
      </form>
      <nav aria-label="Navigazione di sistema" className="flex h-[161px] items-center justify-between pt-7 pr-[188px] pl-[200px]">
        <button type="button" aria-label="App recenti">
          <svg aria-hidden="true" viewBox="0 0 48 48" className="size-12" stroke="#e3e5e8" strokeWidth="4" strokeLinecap="round">
            <path d="M6 4V44M24 4V44M42 4V44" />
          </svg>
        </button>
        <button type="button" aria-label="Home">
          <svg aria-hidden="true" viewBox="0 0 48 48" className="size-12" fill="none" stroke="#e3e5e8" strokeWidth="4">
            <rect x="3" y="3" width="42" height="42" rx="14" />
          </svg>
        </button>
        <button type="button" aria-label="Indietro">
          <svg aria-hidden="true" viewBox="0 0 48 48" className="size-12" fill="none" stroke="#e3e5e8" strokeWidth="4" strokeLinecap="round" strokeLinejoin="round">
            <path d="M37 3L13 24L37 45" />
          </svg>
        </button>
      </nav>
    </footer>
  );
}

export default function App() {
  return (
    <div className="relative isolate h-screen overflow-hidden bg-[#0f161f] font-['Roboto',sans-serif]">
      <Wallpaper />
      <main className="flex flex-col gap-[18px] px-8 pt-[17px] text-[45px] leading-[53px] text-[#fafbfc]">
        <Received size="w-[913px]" tail time="19:17">
          <p><Check /> Condizione corporea aggiornata!</p>
          <Gap />
          <p>Stato:</p>
          <p className="font-bold">Normopeso</p>
          <Gap />
          <p>Cosa vuoi fare ora?</p>
          <p><Salad /> <Command name="dieta" /> — Piano alimentare</p>
          <p><Pan /> <Command name="cucina" /> — Cosa cucino oggi?</p>
          <p><Sos /> <Command name="emergenza" /> — Il mio cane ha mangiato qualcosa</p>
          <p className="pb-10"><Gear /> <Command name="profilo" /> — Modifica un altro campo</p>
        </Received>

        <Sent tone="bg-[#8048d6]" tailFill="fill-[#8048d6]">
          <p className="pr-[22px] pb-[6px]">/emergenza</p>
        </Sent>

        <Received size="w-[883px]" tail time="19:21">
          <p><Sos /> EMERGENZA BreedFeed</p>
          <Gap />
          <p>Mantieni la calma. Per aiutarti al meglio dimmi:</p>
          <Gap />
          <ol>
            <li><Digit n="1" /> Cosa ha mangiato il tuo cane?</li>
            <li><Digit n="2" /> Quanto ne ha mangiato (circa)?</li>
            <li><Digit n="3" /> Quanto tempo fa?</li>
          </ol>
          <Gap />
          <p><Writing /> Scrivi tutto in un solo messaggio:</p>
          <p>Esempio: "Ha mangiato circa 100g di cioccolato fondente, 20 minuti fa"</p>
          <Gap />
          <p><Warning /> Ricorda: in caso di sintomi gravi (vomito continuo, convulsioni, perdita di coscienza) chiama IMMEDIATAMENTE il veterinario.</p>
        </Received>

        <Sent tone="bg-linear-to-b from-[#377ce0] to-[#3082e3]" tailFill="fill-[#3082e3]">
          <p className="-mr-[145px] w-[712px] pb-[6px]">Il cane ha mangiato 300 grammi di cioccolata al latte</p>
        </Sent>

        <Received size="h-[242px] w-[881px]">
          <p><Sos /> Sto valutando la situazione...</p>
        </Received>

        <Received size="h-[300px] w-[921px]">
          <p><Sos /> **VALUTAZIONE EMERGENZA - Zeus**</p>
          <Gap />
          <p><TrafficLight /> **LIVELLO DI RISCHIO: MEDIO ALTO**</p>
        </Received>
      </main>
      <Header />
      <Footer />
    </div>
  );
}
